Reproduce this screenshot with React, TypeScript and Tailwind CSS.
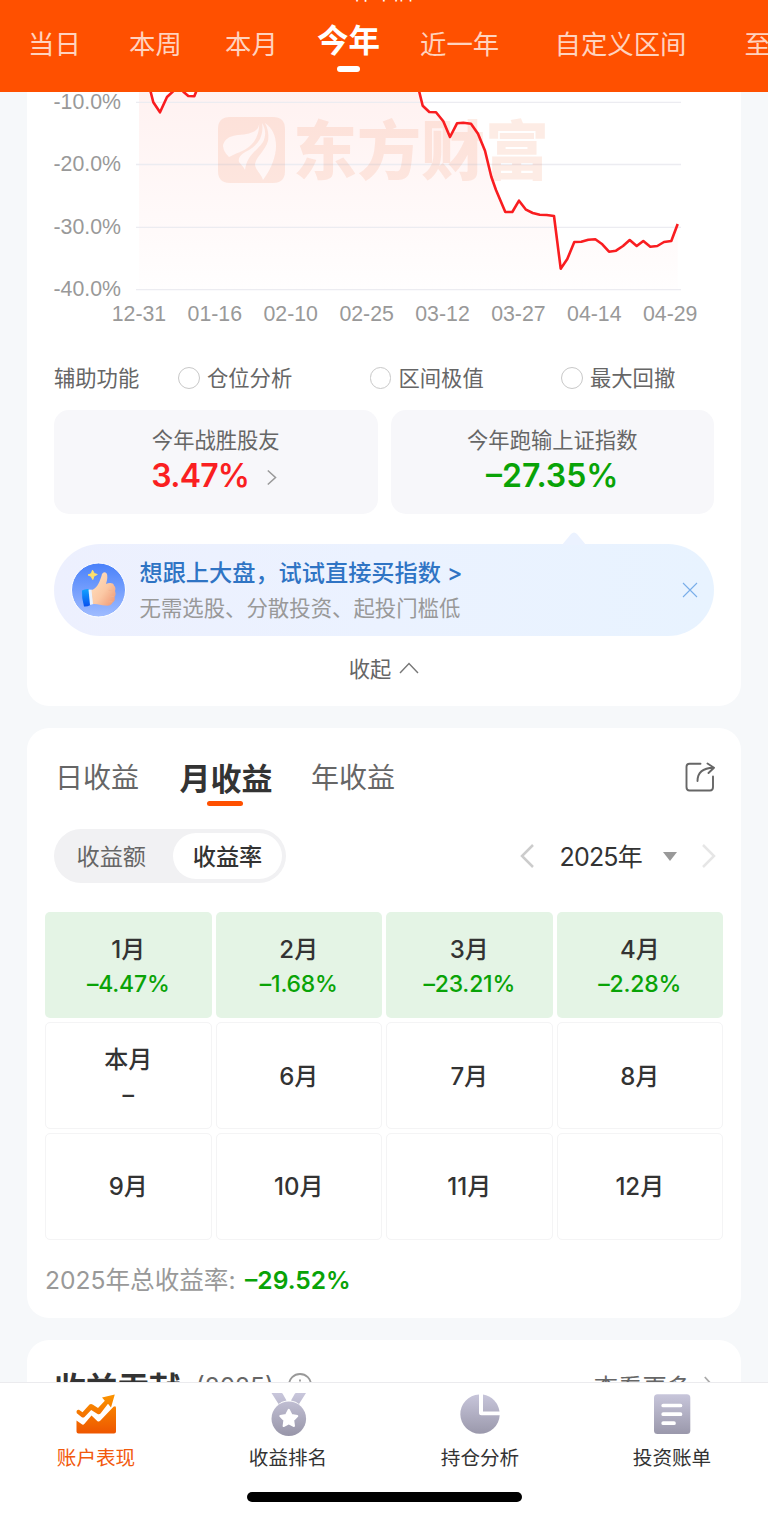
import React from 'react';
import { clsx } from 'clsx';

const RANGES = [
  { label: '当日', className: 'w-[101px]' },
  { label: '本周', className: 'w-[96px]' },
  { label: '本月', className: 'w-[92px]' },
  { label: '今年', className: 'w-[103px]', active: true },
  { label: '近一年', className: 'w-[134.5px]' },
  { label: '自定义区间', className: 'w-[190px]' },
  { label: '至今', className: 'w-[60px]' },
];

const Y_TICKS = ['-10.0%', '-20.0%', '-30.0%', '-40.0%'];
const X_TICKS = ['12-31', '01-16', '02-10', '02-25', '03-12', '03-27', '04-14', '04-29'];

const LINE =
  'M139 60 L150.7 92 L153.3 102.3 L160 112.3 L167 97 L173.5 91 L178 86 L183.7 92 L188.3 96 L194.3 96.3 L196 92 L205 60 L411 60 L419.3 92 L422.7 105.7 L429.3 112 L436 112.3 L443.3 121.3 L450 137 L457 123.3 L463.3 122.7 L471 123.7 L478 133.7 L485 150.7 L491.3 176.7 L496 190 L505.3 212 L512.3 212 L519 200.7 L526 209.7 L532.7 213 L539.7 214.7 L546.7 215 L554 216 L560.7 268.7 L567.3 259 L574.3 242 L581.3 241.7 L588.3 239.7 L595.3 239.3 L602.3 244.3 L609 251.7 L616 250.7 L623 246 L629.7 240 L636.7 246 L643.3 241 L650.3 246.7 L657.3 246 L664 242 L671.3 241 L677.7 224';

const MONTHS = [
  { name: '1月', value: '–4.47%' },
  { name: '2月', value: '–1.68%' },
  { name: '3月', value: '–23.21%' },
  { name: '4月', value: '–2.28%' },
  { name: '本月', value: '–', empty: true },
  { name: '6月' },
  { name: '7月' },
  { name: '8月' },
  { name: '9月' },
  { name: '10月' },
  { name: '11月' },
  { name: '12月' },
];

function Chart() {
  return (
    <div className="flex h-[207px]">
      <div className="-mt-[21px] w-[109px] shrink-0 pl-[26.500px] font-['Liberation_Sans',sans-serif] text-[21.300px] text-[#999]">
        {Y_TICKS.map((tick) => (
          <div key={tick} className="flex h-[62.5px] items-center">{tick}</div>
        ))}
      </div>
      <svg width="546" height="207" viewBox="136 92 546 207" className="shrink-0">
        <defs>
          <linearGradient id="area" x1="0" y1="92" x2="0" y2="290" gradientUnits="userSpaceOnUse">
            <stop offset="0" stopColor="#fff2f1" />
            <stop offset="0.7" stopColor="#fffafa" />
            <stop offset="1" stopColor="#fffefe" />
          </linearGradient>
        </defs>
        <path d={`${LINE} L677.7 290 L139 290 Z`} fill="url(#area)" />
        <g stroke="#ececf1" strokeWidth="1.3">
          <path d="M136 102.3H681M136 164.5H681M136 227.3H681M136 289.7H681" />
        </g>
        {/* watermark */}
        <g fill="#f07848" fillOpacity="0.14">
          <path
            fillRule="evenodd"
            d="M230 117H273Q285 117 285 129V171Q285 183 273 183H230Q218 183 218 171V129Q218 117 230 117Z
               M259 122C260 131 252 134 238 135C229 136 225 139 223 145C223 150 226 154 229 157C236 153 243 152 250 146C256 141 260 132 259 122Z
               M262 123C264 135 259 144 249 150C241 154 238 157 239 162C241 165 244 167 245 170C247 155 257 151 263 142C266 136 266 129 262 123Z
               M265 123C280 133 280 157 263 180C261 173 255 170 255 164C256 157 265 151 268 141C269 134 268 129 265 123Z"
          />
          <text x="293" y="174" fontSize="64" fontWeight="900" fontFamily="'Noto Sans CJK SC', sans-serif">东方财富</text>
        </g>
        <path d={LINE} fill="none" stroke="#f91d20" strokeWidth="2.6" strokeLinejoin="round" />
      </svg>
    </div>
  );
}

function ThumbIcon() {
  return (
    <svg width="56" height="56" viewBox="0 0 56 56">
      <defs>
        <linearGradient id="disc" x1="0" y1="0" x2="0" y2="1">
          <stop offset="0" stopColor="#4880fa" />
          <stop offset="1" stopColor="#a0bcff" />
        </linearGradient>
        <linearGradient id="hand" x1="0" y1="0" x2="1" y2="1">
          <stop offset="0" stopColor="#ffe3c4" />
          <stop offset="0.55" stopColor="#fbc8a4" />
          <stop offset="1" stopColor="#ee9471" />
        </linearGradient>
        <linearGradient id="cuff" x1="0" y1="0" x2="0" y2="1">
          <stop offset="0" stopColor="#12a4ff" />
          <stop offset="1" stopColor="#0850ee" />
        </linearGradient>
      </defs>
      <circle cx="28.500" cy="28" r="27" fill="url(#disc)" stroke="#fff" strokeWidth="1" />
      <path d="M12 28.5Q15 26.5 19 27L20.5 43Q17 45 14 44.5Q11.500 36 12 28.500Z" fill="url(#cuff)" />
      <path d="M18.500 27.500L22 27.800L23.500 42L20 43Z" fill="#e9f2ff" />
      <path
        d="M21.500 28C26 27 29 22 31.500 14C32 9.500 36.500 9 37.200 13C37.800 17 36.500 20 36 22C39 20.500 43.500 20.500 44 23.500C46 25.500 45.500 28 45 29C46 32 45.500 34 44.500 35C45.500 38 44 40 42.500 40.500C41.500 43.500 38 44 35 43.500C31 43 27 41.500 23 42Z"
        fill="url(#hand)"
      />
      <path d="M39 28.500H43.500M40 34.500H43.500M39 39.800H42" stroke="#f3b590" strokeWidth="0.700" strokeLinecap="round" />
      <path d="M22.500 8.200L24.300 11.500L27.300 12.500L24 14L22.800 17.500L21 14.200L18 13L21.300 11.600Z" fill="#ffe06b" stroke="#ffe06b" strokeLinejoin="round" />
    </svg>
  );
}

function Chevron({ d, className }: { d: string; className: string }) {
  return (
    <svg viewBox="0 0 20 24" fill="none" stroke="currentColor" className={className}>
      <path d={d} />
    </svg>
  );
}

function NavIcon({ name }: { name: string }) {
  return (
    <svg width="44" height="46" viewBox="0 0 44 46" fill={name === 'trend' ? 'url(#hot)' : 'url(#muted)'}>
      <defs>
        <linearGradient id="hot" x1="0" y1="3" x2="0" y2="43" gradientUnits="userSpaceOnUse">
          <stop offset="0" stopColor="#fb9500" />
          <stop offset="1" stopColor="#ee5500" />
        </linearGradient>
        <linearGradient id="muted" x1="0" y1="2" x2="0" y2="44" gradientUnits="userSpaceOnUse">
          <stop offset="0" stopColor="#c9c7dc" />
          <stop offset="1" stopColor="#9997aa" />
        </linearGradient>
      </defs>
      {name === 'trend' && (
        <>
          <path d="M2.800 22.300C2 20 3 18.500 5 18.800L8.500 21.300L15.500 13.500Q17 12.300 19 13.700L24 17L30.800 9.800L28 6.500L40.800 3.500L37 16.500L34 12.700L26.500 22.500Q25 24 23.200 22.700L17.200 19L10.500 26Q9 27.200 7.500 26Z" />
          <path d="M2.500 29.500L8.200 33.500Q9.500 34 10.500 32.800L17.500 24.500L23.500 30.200Q25 31.200 26.200 29.800L39.500 15.800Q42 14 42 17V40.500Q42 42.500 40 42.500H4.500Q2.500 42.500 2.500 40.500Z" />
        </>
      )}
      {name === 'medal' && (
        <>
          <path d="M5.500 2H15.500Q16.300 2 16.700 2.800L20.500 9.500Q15.500 10 12.500 13Z M40 2H30Q29.200 2 28.800 2.800L25 9.500Q30 10 33 13Z" />
          <circle cx="22.800" cy="27.700" r="17.300" />
          <path
            d="M22.800 18.800L25.500 24L31.300 25L27.200 29.200L28 35L22.800 32.400L17.600 35L18.400 29.200L14.300 25L20.100 24Z"
            fill="#fff"
            stroke="#fff"
            strokeWidth="2"
            strokeLinejoin="round"
          />
        </>
      )}
      {name === 'pie' && (
        <>
          <path d="M21 3.500A19.700 19.700 0 1 0 41.700 24.200H23.500Q21 24.200 21 21.700Z" />
          <path d="M25 3.600A19.700 19.700 0 0 1 41.500 20.500H25Z" />
        </>
      )}
      {name === 'bill' && (
        <>
          <rect x="4" y="3.300" width="36.300" height="39.700" rx="3.500" />
          <path d="M13.200 14.500H30.500M13.200 23.200H30.500M13.200 32.200H24" stroke="#fff" strokeWidth="3.700" strokeLinecap="round" />
        </>
      )}
    </svg>
  );
}

const NAV = [
  { label: '账户表现', icon: 'trend', active: true },
  { label: '收益排名', icon: 'medal' },
  { label: '持仓分析', icon: 'pie' },
  { label: '投资账单', icon: 'bill' },
];

export default function App() {
  return (
    <div className="flex h-[1516px] w-[768px] flex-col overflow-hidden bg-[#f6f8fa] font-['Inter','Noto_Sans_CJK_SC',sans-serif] leading-none text-[#333]">
      <header className="h-[92.400px] shrink-0 overflow-hidden bg-[#ff5000] text-white">
        <div className="flex h-[2px] items-end justify-center overflow-hidden text-[21px]">
          <span className="leading-[20px]">休市牌</span>
        </div>
        <div className="flex pl-[28px] whitespace-nowrap">
          {RANGES.map((range) => (
            <div key={range.label} className={clsx('shrink-0', range.className)}>
              <div
                className={clsx(
                  'flex items-center',
                  range.active ? 'h-[77px] text-[31.500px] font-bold' : 'h-[85px] text-[26.400px] text-white/75'
                )}
              >
                {range.label}
              </div>
              {range.active && <div className="-mt-[13px] ml-[20px] h-[5.500px] w-[23px] rounded-full bg-white" />}
            </div>
          ))}
        </div>
      </header>

      <main className="-mt-[0.400px] flex h-[1290px] shrink-0 flex-col gap-[22px] overflow-hidden px-[27px]">
        <section className="h-[614px] shrink-0 rounded-b-[22px] bg-white">
          <Chart />
          <div className="flex h-[31px] items-center pt-px pl-[74px] font-['Liberation_Sans',sans-serif] text-[21.300px] text-[#999]">
            {X_TICKS.map((tick) => (
              <span key={tick} className="w-[75.900px] text-center">{tick}</span>
            ))}
          </div>

          <div className="mt-[22px] flex h-[52px] items-center pl-[27px] text-[21.300px] text-[#666]">
            <span className="w-[124px] shrink-0 pt-px">辅助功能</span>
            {['仓位分析', '区间极值', '最大回撤'].map((label) => (
              <label key={label} className="flex w-[191.500px] shrink-0 items-center gap-[7.500px]">
                <span className="size-[21.500px] rounded-full border-[1.500px] border-[#c8c8c8]" />
                <span className="pt-px">{label}</span>
              </label>
            ))}
          </div>

          <div className="mx-[27px] mt-[6.400px] flex gap-[13px] text-center">
            <div className="h-[103.600px] flex-1 rounded-[15px] bg-[#f7f7fa] pt-[17.500px]">
              <div className="text-[21.300px] leading-[24px] text-[#666]">今年战胜股友</div>
              <div className="mt-[5px] flex items-center justify-center gap-[17px] text-[32px] leading-[38px] font-semibold text-[#fa1f21]">
                <span className="tracking-[-0.8px]">3.47%</span>
                <Chevron d="M4 2L15 12L4 22" className="mt-[4px] h-[17px] w-[14px] -translate-x-px stroke-[2.200] text-[#999]" />
              </div>
            </div>
            <div className="h-[103.600px] flex-1 rounded-[15px] bg-[#f7f7fa] pt-[17.500px]">
              <div className="text-[21.300px] leading-[24px] text-[#666]">今年跑输上证指数</div>
              <div className="mt-[5px] text-[32px] leading-[38px] font-semibold text-[#09a307]">–27.35%</div>
            </div>
          </div>

          <div className="relative mx-[27px] mt-[30px] flex h-[92.500px] items-center rounded-full bg-linear-to-r from-[#edf0fe] via-[#ebf2ff] to-[#e8f3ff] pr-[16px] pl-[16px]">
            <svg width="24" height="13" viewBox="0 0 24 13" fill="#ebf2ff" className="absolute -top-[12px] left-[508px]">
              <path d="M0 13L9 2Q12 -1 15 2L24 13Z" />
            </svg>
            <ThumbIcon />
            <div className="ml-[13.500px] flex-1 pt-[2px] whitespace-nowrap">
              <div className="text-[23.200px] leading-[34px] font-medium text-[#2f74c4]">想跟上大盘，试试直接买指数 &gt;</div>
              <div className="text-[21.400px] leading-[36px] text-[#999]">无需选股、分散投资、起投门槛低</div>
            </div>
            <svg width="16" height="16" viewBox="0 0 16 16" stroke="#79aee9" strokeWidth="1.100">
              <path d="M1 1L15 15M15 1L1 15" />
            </svg>
          </div>

          <div className="mt-[17px] flex h-[32px] items-center justify-center gap-[8px] text-[21.300px] text-[#666]">
            收起
            <svg width="20" height="12" viewBox="0 0 20 12" fill="none" stroke="#777" strokeWidth="1.400" className="-mt-[3px]">
              <path d="M1 11L10 1.500L19 11" />
            </svg>
          </div>
        </section>

        <section className="h-[589.500px] shrink-0 rounded-[22px] bg-white">
          <div className="flex h-[101px] pr-[26px] pl-[28px] text-[28px] text-[#666]">
            <div className="flex h-[99px] w-[124.500px] items-center">日收益</div>
            <div className="w-[131.500px] text-[31px] font-bold text-[#333]">
              <div className="flex h-[101px] items-center">月收益</div>
              <div className="-mt-[28.500px] ml-[27.500px] h-[5.500px] w-[36px] rounded-full bg-[#ff5000]" />
            </div>
            <div className="flex h-[99px] flex-1 items-center">年收益</div>
            <svg width="30" height="30" viewBox="0 0 30 30" fill="none" stroke="#666" strokeWidth="1.900" strokeLinecap="round" strokeLinejoin="round" className="mt-[34px]">
              <path d="M15.500 1.700H4.500Q1.500 1.700 1.500 4.700V25Q1.500 28.500 4.500 28.500H25Q28 28.500 28 25V14.500" />
              <path d="M12.500 19C12.500 10 18 6 28.500 5.700M22.500 1.500L29 5.700L23.500 11" />
            </svg>
          </div>

          <div className="flex h-[54px] items-center pl-[27px]">
            <div className="flex h-[54px] w-[232px] items-center rounded-full bg-[#f1f1f3] text-[23.200px]">
              <span className="w-[119px] pt-[3px] pl-[22.500px] text-[#666]">收益额</span>
              <span className="flex h-[46px] w-[109px] items-center justify-center rounded-full bg-white pt-[3px] font-medium">收益率</span>
            </div>
            <Chevron d="M16 1L5 12L16 23" className="ml-[231px] h-[24px] w-[20px] stroke-[2.500] text-[#ccc]" />
            <span className="ml-[22.500px] w-[84.500px] pt-[2px] text-[25px] tracking-[-0.8px] whitespace-nowrap">2025年</span>
            <svg width="14" height="9" viewBox="0 0 14 9" fill="#999" className="ml-[19px]">
              <path d="M0 0H14L7 9Z" />
            </svg>
            <Chevron d="M4 1L15 12L4 23" className="ml-[22px] h-[24px] w-[20px] stroke-[2.500] text-[#e6e6e6]" />
          </div>

          <div className="mx-[18px] mt-[28.500px] grid grid-cols-4 gap-[4px]">
            {MONTHS.map((month) => {
              const filled = month.value && !month.empty;
              return (
                <div
                  key={month.name}
                  className={clsx(
                    'flex h-[106.800px] flex-col items-center rounded-[5px] text-[24px] font-medium',
                    filled ? 'bg-[#e4f4e5]' : 'border border-[#f4f4f5]',
                    month.value ? 'pt-[21px]' : 'justify-center pt-[2px]'
                  )}
                >
                  <div className={clsx('leading-[34px]', month.empty && '-mt-px')}>{month.name}</div>
                  {month.value && (
                    <div className={clsx('-mt-px text-[23px] leading-[36px] tracking-[-0.2px]', filled ? 'text-[#09a307]' : 'pt-px')}>{month.value}</div>
                  )}
                </div>
              );
            })}
          </div>

          <div className="mt-[23.500px] flex h-[34px] items-center gap-[9.500px] pl-[18px] text-[24.600px] text-[#999]">
            <span>2025年总收益率:</span>
            <span className="font-semibold text-[#09a307]">–29.52%</span>
          </div>
        </section>

        <section className="flex h-[90px] shrink-0 items-center rounded-t-[22px] bg-white pr-[25px] pl-[27px]">
          <h2 className="pt-[8px] text-[31.700px] font-bold">收益贡献</h2>
          <span className="ml-[15px] pt-[3px] text-[24.500px] text-[#666]">(2025)</span>
          <svg width="24" height="24" viewBox="0 0 24 24" fill="none" stroke="#999" strokeWidth="1.800" className="ml-[14px]">
            <circle cx="12" cy="12" r="11" />
            <path d="M12 6.500V8.500M12 11V18" />
          </svg>
          <span className="ml-auto pt-[5px] text-[24.300px] text-[#666]">查看更多</span>
          <Chevron d="M6 2L15 12L6 22" className="ml-[9px] h-[20px] w-[16px] stroke-[2.200] text-[#aaa]" />
        </section>
      </main>

      <nav className="flex flex-1 flex-col items-center border-t border-[#ebebee] bg-white">
        <div className="flex">
          {NAV.map((item) => (
            <div key={item.label} className="flex w-[192px] flex-col items-center pt-[8px]">
              <NavIcon name={item.icon} />
              <span className={clsx('mt-[6px] text-[19.600px] leading-[30px]', item.active && 'text-[#f2590c]')}>{item.label}</span>
            </div>
          ))}
        </div>
        <div className="mt-[19px] h-[9.500px] w-[275px] rounded-full bg-black" />
      </nav>
    </div>
  );
}
